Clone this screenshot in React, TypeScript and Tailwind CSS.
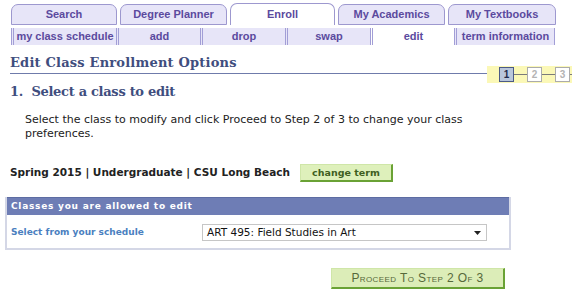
import React from 'react';

const tabs = [
  { label: 'Search', w: 'w-[106px]' },
  { label: 'Degree Planner', w: 'w-[107px]' },
  { label: 'Enroll', w: 'w-[105px]', active: true },
  { label: 'My Academics', w: 'w-[107px]' },
  { label: 'My Textbooks', w: 'w-[108px]' },
];

const subNav = [
  { label: 'my class schedule', w: 'w-[105px]' },
  { label: 'add', w: 'w-[84px]' },
  { label: 'drop', w: 'w-[85px]' },
  { label: 'swap', w: 'w-[85px]' },
  { label: 'edit', w: 'w-[84px]', active: true },
  { label: 'term information', w: 'w-[101px]', last: true },
];

const StepBox = ({ n, active }: { n: number; active?: boolean }) => (
  <div
    className={
      active
        ? 'w-[15px] h-[15px] border border-[#4b5a86] bg-[#b9c6db] text-[#1f2a4a] text-[10px] font-bold leading-[13px] text-center'
        : 'w-[15px] h-[15px] border border-[#ababab] bg-white text-[#b4b4b4] text-[10px] font-bold leading-[13px] text-center'
    }
  >
    {n}
  </div>
);

export default function App() {
  return (
    <div className="w-[574px] h-[293px] bg-white overflow-hidden font-['DejaVu_Sans',Verdana,sans-serif] text-[11px] text-[#333]">
      {/* Top tabs */}
      <div className="flex items-end h-[25px] pl-[11px] gap-[3px] font-['Liberation_Sans',Arial,sans-serif] font-bold text-[11px] text-[#5b4a9e]">
        {tabs.map((t) => (
          <div
            key={t.label}
            className={
              t.active
                ? `${t.w} h-[22px] bg-white border border-b-0 border-[#9d98cf] rounded-t-[7px] flex items-center justify-center`
                : `${t.w} h-[21px] bg-[#e7e5f8] border border-[#9d98cf] rounded-t-[7px] flex items-center justify-center`
            }
          >
            {t.label}
          </div>
        ))}
      </div>

      {/* Sub navigation */}
      <div className="flex mt-[3px] ml-[11px] h-[17px] font-['Liberation_Sans',Arial,sans-serif] font-bold text-[11px] text-[#5b4a9e] whitespace-nowrap">
        {subNav.map((s) => (
          <div
            key={s.label}
            className={
              (s.active ? 'bg-white ' : 'bg-[#e7e5f8] ') +
              'border-l-[3px] border-double border-[#a29ed6] ' +
              (s.last ? 'border-r border-r-[#a29ed6] border-r-solid ' : '') +
              `${s.w} flex items-center justify-center leading-none`
            }
          >
            {s.label}
          </div>
        ))}
      </div>

      {/* Page title with step indicator */}
      <div className="flex items-end mt-[10px] pl-[10px] pr-[2px]">
        <div className="flex-1 border-b border-[#6f7bab] mb-[9px] pb-[2px]">
          <h1 className="font-['DejaVu_Serif',Georgia,serif] font-bold text-[13px] leading-[16px] text-[#3f4e7e] tracking-[0.2px]">
            Edit Class Enrollment Options
          </h1>
        </div>
        <div className="w-[85px] h-[17px] bg-[#fbf8b7] flex items-center pl-[12px] font-['Liberation_Sans',Arial,sans-serif]">
          <StepBox n={1} active />
          <div className="w-[13px] h-px bg-[#7a7a7a]" />
          <StepBox n={2} />
          <div className="w-[13px] h-px bg-[#7a7a7a]" />
          <StepBox n={3} />
          <div className="w-[2px] h-px bg-[#7a7a7a]" />
        </div>
      </div>

      <h2 className="pl-[10px] font-['DejaVu_Serif',Georgia,serif] font-bold text-[13px] leading-[18px] tracking-[-0.3px] text-[#3f4e7e]">
        1.&nbsp; Select a class to edit
      </h2>

      <p className="ml-[25px] w-[470px] mt-[12px] leading-[14px] text-[#222]">
        Select the class to modify and click Proceed to Step 2 of 3 to change your class preferences.
      </p>

      <div className="flex items-center pl-[10px] mt-[23px] h-[18px]">
        <span className="font-bold text-[10.5px] text-[#222]">Spring 2015 | Undergraduate | CSU Long Beach</span>
        <button className="ml-[10px] w-[93px] h-[18px] bg-[#def0bb] border border-[#cfe6a8] border-r-2 border-b-2 border-r-[#6aa235] border-b-[#6aa235] text-[#3f5f1f] font-bold text-[9.5px] leading-none">
          change term
        </button>
      </div>

      {/* Classes panel */}
      <div className="ml-[5px] mt-[15px] w-[506px] border-2 border-t-0 border-[#d4d7e6]">
        <div className="h-[18px] bg-[#6e7db5] border-t border-[#5d6ca2] px-[4px] flex items-center text-white font-bold text-[9px] tracking-[0.75px]">
          Classes you are allowed to edit
        </div>
        <div className="flex items-center h-[33px] pl-[4px] pt-[2px]">
          <span className="w-[191px] font-bold text-[9px] text-[#4b7fbf]">Select from your schedule</span>
          <div className="w-[285px] h-[17px] border border-[#c6c6c6] bg-white flex items-center justify-between pl-[4px] pr-[5px] text-[10.5px] text-[#111]">
            <span>ART 495: Field Studies in Art</span>
            <svg width="7" height="4" viewBox="0 0 7 4">
              <path d="M0 0h7L3.5 4z" fill="#222" />
            </svg>
          </div>
        </div>
      </div>

      <div className="flex justify-end w-[505px] mt-[18px]">
        <button className="w-[174px] h-[21px] bg-[#dcedb8] border border-[#cfe6a8] border-r-2 border-b-2 border-r-[#6aa235] border-b-[#6aa235] text-[#56693a] font-['Liberation_Sans',Arial,sans-serif] text-[12px] tracking-[0.4px] leading-none [font-variant:small-caps]">
          Proceed To Step 2 Of 3
        </button>
      </div>
    </div>
  );
}
